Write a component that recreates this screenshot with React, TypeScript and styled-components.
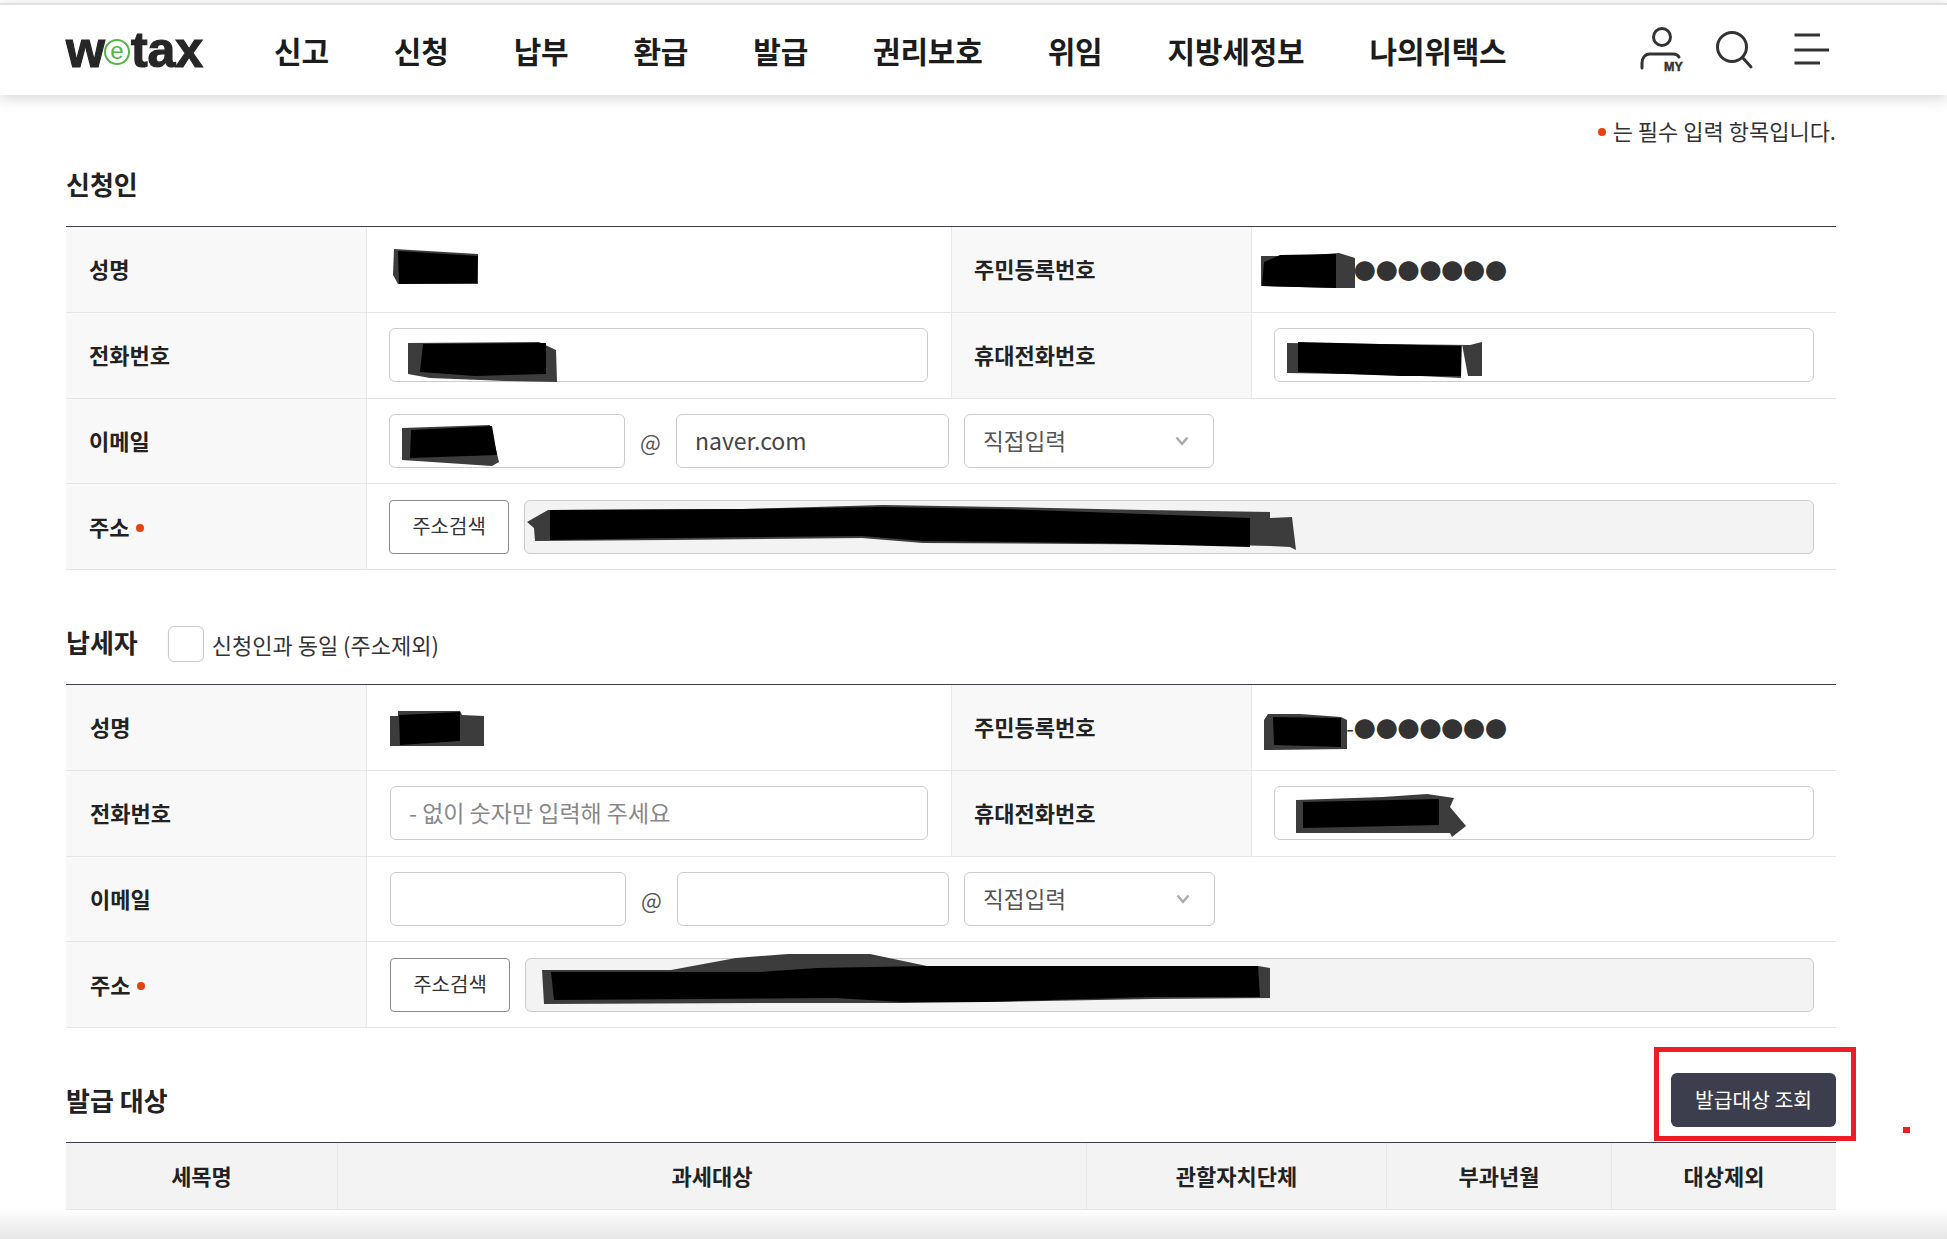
import React from "react";
import styled, { createGlobalStyle } from "styled-components";

const Global = createGlobalStyle`
  html, body { margin: 0; padding: 0; background: #fff; }
  body { font-family: "Noto Sans CJK KR", "Noto Sans", sans-serif; color: #222; overflow: hidden; }
  * { box-sizing: border-box; }
`;

const Page = styled.div`
  position: relative;
  width: 1947px;
  height: 1239px;
  overflow: hidden;
  background: #fff;
`;

const TopBar = styled.header`
  position: relative;
  z-index: 1;
  height: 92px;
  margin-top: 3px;
  border-top: 2px solid #e0e0e0;
  padding: 0 117px 0 66px;
  display: flex;
  align-items: center;
  background: #fff;
  box-shadow: 0 3px 14px rgba(0, 0, 0, 0.17);
`;

const Logo = styled.div`
  width: 208px;
  display: flex;
  align-items: center;
  font-family: "Liberation Sans", sans-serif;
  font-weight: 700;
  font-size: 50px;
  line-height: 1;
  color: #262626;
  -webkit-text-stroke: 1.2px #262626;
`;

const LogoE = styled.span`
  width: 26px;
  height: 26px;
  margin: 4px 1px 0 -1px;
  border: 2px solid #55b546;
  border-radius: 50%;
  display: flex;
  align-items: center;
  justify-content: center;
  font-size: 24px;
  font-weight: 400;
  font-family: "Liberation Sans", sans-serif;
  color: #55b546;
  -webkit-text-stroke: 0;
  padding-bottom: 3px;
`;

const Nav = styled.nav`
  display: flex;
  gap: 65px;
`;

const NavItem = styled.a`
  font-size: 30px;
  font-weight: 700;
  color: #1c1c1c;
  line-height: 40px;
  letter-spacing: -0.2px;
`;

const Icons = styled.div`
  margin-left: auto;
  display: flex;
  gap: 30px;
  align-items: center;
`;

const Main = styled.main`
  padding: 19px 111px 0 66px;
`;

const Note = styled.p`
  margin: 0 0 12px;
  height: 32px;
  display: flex;
  justify-content: flex-end;
  align-items: center;
  gap: 7px;
  font-size: 22px;
  line-height: 32px;
  color: #333;
`;

const Dot = styled.i`
  display: inline-block;
  width: 8px;
  height: 8px;
  border-radius: 50%;
  background: #e8420f;
  margin-top: 4px;
`;

const Section = styled.section`
  & + & { margin-top: 46px; }
`;

const SectionHead = styled.div`
  height: 54px;
  margin-bottom: 14px;
  display: flex;
  align-items: center;
`;

const Heading = styled.h2`
  margin: 0 0 2px;
  font-size: 26px;
  font-weight: 700;
  color: #222;
  line-height: 34px;
`;

const CheckLabel = styled.label`
  display: flex;
  align-items: center;
  gap: 8px;
  margin: 2px 0 0 30px;
  font-size: 22px;
  color: #333;
`;

const CheckBox = styled.span`
  width: 36px;
  height: 36px;
  border: 1px solid #ccc;
  border-radius: 6px;
  background: #fff;
  box-shadow: 0 0 2px rgba(0, 0, 0, 0.08);
`;

const SearchWrap = styled.div`
  position: relative;
  margin: 0 0 2px auto;
`;

const DarkButton = styled.button`
  display: block;
  width: 165px;
  height: 54px;
  padding: 0 0 2px;
  border: 0;
  border-radius: 6px;
  background: #3c3e4d;
  color: #fff;
  font-family: inherit;
  font-size: 20.4px;
  font-weight: 400;
  cursor: pointer;
`;

const Highlight = styled.span`
  position: absolute;
  left: -17px;
  right: -20px;
  top: -26px;
  bottom: -14px;
  border: 5px solid #ee1c25;
  pointer-events: none;
`;

const StrayMark = styled.span`
  position: absolute;
  left: 1903px;
  top: 1127px;
  width: 7px;
  height: 6px;
  background: #ee1c25;
`;

const FormGrid = styled.div`
  display: grid;
  grid-template-columns: 301px 585px 300px 584px;
  grid-auto-rows: 85.75px;
  border-top: 1px solid #3c3e4d;
`;

const Label = styled.div<{ $pad?: number }>`
  display: flex;
  align-items: center;
  gap: 7px;
  padding-left: ${(p) => p.$pad ?? 22}px;
  padding-bottom: 2px;
  background: #f8f8f8;
  border-bottom: 1px solid #e6e6e6;
  border-right: 1px solid #e9e9e9;
  font-size: 22px;
  font-weight: 700;
  color: #222;
`;

const Value = styled.div<{ $span?: number; $inset?: boolean }>`
  grid-column: span ${(p) => p.$span ?? 1};
  display: flex;
  align-items: center;
  padding: 0 22px 0 ${(p) => (p.$inset ? 23 : 22)}px;
  border-bottom: 1px solid #e6e6e6;
  font-size: 22px;
  color: #333;
  min-width: 0;
`;

const Divided = styled(Value)`
  padding-right: 23px;
  border-right: 1px solid #e9e9e9;
`;

const Field = styled.input<{ $w?: number; $fill?: boolean }>`
  display: block;
  height: 54px;
  width: ${(p) => (p.$w ? `${p.$w}px` : "100%")};
  flex: ${(p) => (p.$fill ? 1 : "none")};
  min-width: 0;
  padding: 0 18px 2px;
  border: 1px solid #ccc;
  border-radius: 6px;
  background: ${(p) => (p.readOnly ? "#f3f3f3" : "#fff")};
  font-family: "Noto Sans CJK KR", "Noto Sans", sans-serif;
  font-size: 23px;
  color: #444;
  outline: none;
  &::placeholder { color: #888; opacity: 1; }
`;

const At = styled.span`
  width: 51px;
  text-align: center;
  font-size: 22px;
  color: #555;
  flex: none;
`;

const Picker = styled.div<{ $w: number }>`
  width: ${(p) => p.$w}px;
  height: 54px;
  margin-left: 15px;
  flex: none;
  padding: 0 24px 0 18px;
  display: flex;
  align-items: center;
  justify-content: space-between;
  border: 1px solid #ccc;
  border-radius: 6px;
  background: #fff;
  font-size: 22.6px;
  color: #555;
`;

const AddressButton = styled.button`
  width: 120px;
  height: 54px;
  flex: none;
  margin-right: 15px;
  padding: 0 0 2px;
  border: 1px solid #8a8a8a;
  border-radius: 4px;
  background: #fff;
  font-family: inherit;
  font-size: 20px;
  color: #333;
`;

const Masked = styled.span`
  font-size: 22px;
  color: #333;
  white-space: nowrap;
  letter-spacing: -0.15px;
`;

const TableHead = styled.div`
  display: grid;
  grid-template-columns: 271px 749px 300px 225px 225px;
  height: 68px;
  border-top: 1px solid #3c3e4d;
  border-bottom: 1px solid #e6e6e6;
  background: #f3f3f3;
`;

const HeadCell = styled.div`
  display: flex;
  align-items: center;
  justify-content: center;
  padding-bottom: 3px;
  font-size: 22px;
  font-weight: 700;
  color: #222;
  & + & { border-left: 1px solid #e6e6e6; }
`;

const BottomFade = styled.div`
  position: absolute;
  left: 0;
  right: 0;
  bottom: 0;
  height: 30px;
  background: linear-gradient(to bottom, rgba(230, 230, 230, 0), #e6e6e6);
  pointer-events: none;
`;

const ScribbleLayer = styled.svg`
  position: absolute;
  left: 0;
  top: 0;
  width: 1947px;
  height: 1239px;
  pointer-events: none;
`;

const scribbles: { gray: string; black: string }[] = [
  { gray: "394,249 478,254 478,284 398,284 393,275", black: "398,251 478,256 477,283 399,284" },
  { gray: "1261,256 1300,256 1339,253 1355,258 1355,288 1337,288 1261,286", black: "1280,255 1336,254 1336,288 1262,286 1264,262" },
  { gray: "408,343 539,342 556,350 557,382 505,381 430,378 408,374", black: "423,344 546,343 546,374 475,376 420,372" },
  { gray: "1287,343 1470,345 1482,342 1482,376 1468,376 1462,344 1461,378 1400,375 1287,373", black: "1298,342 1461,346 1461,376 1400,376 1298,372" },
  { gray: "402,428 490,425 499,462 492,466 402,460", black: "411,430 492,426 497,455 410,458" },
  { gray: "527,522 548,510 742,509 883,505 1001,507 1145,510 1270,512 1270,518 1292,517 1296,550 1290,547 1270,546 1230,545 923,543 862,538 671,540 535,541 534,528", black: "550,510 742,509 883,507 1001,509 1145,514 1250,518 1250,547 1100,543 923,541 862,536 671,538 550,540" },
  { gray: "390,716 398,716 398,711 460,711 462,715 484,716 484,746 398,746 390,746", black: "399,715 460,712 460,741 400,745" },
  { gray: "1264,720 1268,714 1300,714 1341,717 1347,720 1347,749 1264,750", black: "1273,717 1341,718 1341,747 1274,745" },
  { gray: "1296,800 1383,797 1427,794 1454,798 1450,807 1466,826 1452,837 1450,833 1306,833 1296,833", black: "1303,802 1439,799 1439,825 1303,828" },
  { gray: "542,970 671,970 736,958 788,954 870,954 927,966 1080,967 1258,966 1270,968 1270,998 1152,999 984,1002 901,1003 760,1003 544,1004", black: "551,972 760,972 817,968 927,966 1258,966 1260,997 1152,997 984,1002 901,1002 836,998 554,1000" },
];

const nav = ["신고", "신청", "납부", "환급", "발급", "권리보호", "위임", "지방세정보", "나의위택스"];

function PersonIcon() {
  return (
    <svg width="46" height="50" viewBox="0 0 46 50" fill="none" stroke="#333" strokeWidth="3" strokeLinecap="round">
      <circle cx="23" cy="12" r="8.5" />
      <path d="M3 43 V38 C3 33 6 29 11 29 H34 C37 29 39 30 40 32" />
      <text x="25" y="46" fontFamily="Liberation Sans, sans-serif" fontWeight="700" fontSize="12.5" fill="#333" stroke="#333" strokeWidth="0.5">MY</text>
    </svg>
  );
}

function SearchIcon() {
  return (
    <svg width="40" height="50" viewBox="0 0 40 50" fill="none" stroke="#333" strokeWidth="3" strokeLinecap="round">
      <circle cx="17" cy="22" r="14.5" />
      <path d="M28 33 L36 42" />
    </svg>
  );
}

function MenuIcon() {
  return (
    <svg width="45" height="50" viewBox="0 0 45 50" fill="none" stroke="#333" strokeWidth="3">
      <path d="M9.500 10 H35 M9.500 25 H44 M9.500 38 H35" />
    </svg>
  );
}

function Chevron() {
  return (
    <svg width="14" height="10" viewBox="0 0 14 10" fill="none" stroke="#aaa" strokeWidth="2.4">
      <path d="M1.500 1.500 L7 8 L12.500 1.500" />
    </svg>
  );
}

function PersonForm({ second }: { second?: boolean }) {
  const pad = second ? 24 : 23;
  return (
    <FormGrid>
      <Label $pad={pad}>성명</Label>
      <Divided $inset={second} />
      <Label>주민등록번호</Label>
      <Value><Masked>000000-●●●●●●●</Masked></Value>

      <Label $pad={pad}>전화번호</Label>
      <Divided $inset={second}>
        {second ? <Field placeholder="- 없이 숫자만 입력해 주세요" /> : <Field />}
      </Divided>
      <Label>휴대전화번호</Label>
      <Value><Field /></Value>

      <Label $pad={pad}>이메일</Label>
      <Value $span={3} $inset={second}>
        <Field $w={236} />
        <At>@</At>
        <Field $w={second ? 272 : 273} defaultValue={second ? "" : "naver.com"} />
        <Picker $w={second ? 251 : 250}>직접입력<Chevron /></Picker>
      </Value>

      <Label $pad={pad}>주소<Dot /></Label>
      <Value $span={3} $inset={second}>
        <AddressButton>주소검색</AddressButton>
        <Field $fill readOnly />
      </Value>
    </FormGrid>
  );
}

export default function App() {
  return (
    <Page>
      <Global />
      <TopBar>
        <Logo>
          w<LogoE>e</LogoE>tax
        </Logo>
        <Nav>
          {nav.map((n) => (
            <NavItem key={n}>{n}</NavItem>
          ))}
        </Nav>
        <Icons>
          <PersonIcon />
          <SearchIcon />
          <MenuIcon />
        </Icons>
      </TopBar>
      <Main>
        <Note><Dot />는 필수 입력 항목입니다.</Note>
        <Section>
          <SectionHead><Heading>신청인</Heading></SectionHead>
          <PersonForm />
        </Section>
        <Section>
          <SectionHead>
            <Heading>납세자</Heading>
            <CheckLabel><CheckBox />신청인과 동일 (주소제외)</CheckLabel>
          </SectionHead>
          <PersonForm second />
        </Section>
        <Section>
          <SectionHead>
            <Heading>발급 대상</Heading>
            <SearchWrap>
              <DarkButton>발급대상 조회</DarkButton>
              <Highlight />
            </SearchWrap>
          </SectionHead>
          <TableHead>
            <HeadCell>세목명</HeadCell>
            <HeadCell>과세대상</HeadCell>
            <HeadCell>관할자치단체</HeadCell>
            <HeadCell>부과년월</HeadCell>
            <HeadCell>대상제외</HeadCell>
          </TableHead>
        </Section>
      </Main>
      <ScribbleLayer viewBox="0 0 1947 1239">
        {scribbles.map((s, i) => (
          <g key={i}>
            <polygon points={s.gray} fill="#3c3c3c" />
            <polygon points={s.black} fill="#000" />
          </g>
        ))}
      </ScribbleLayer>
      <StrayMark />
      <BottomFade />
    </Page>
  );
}
